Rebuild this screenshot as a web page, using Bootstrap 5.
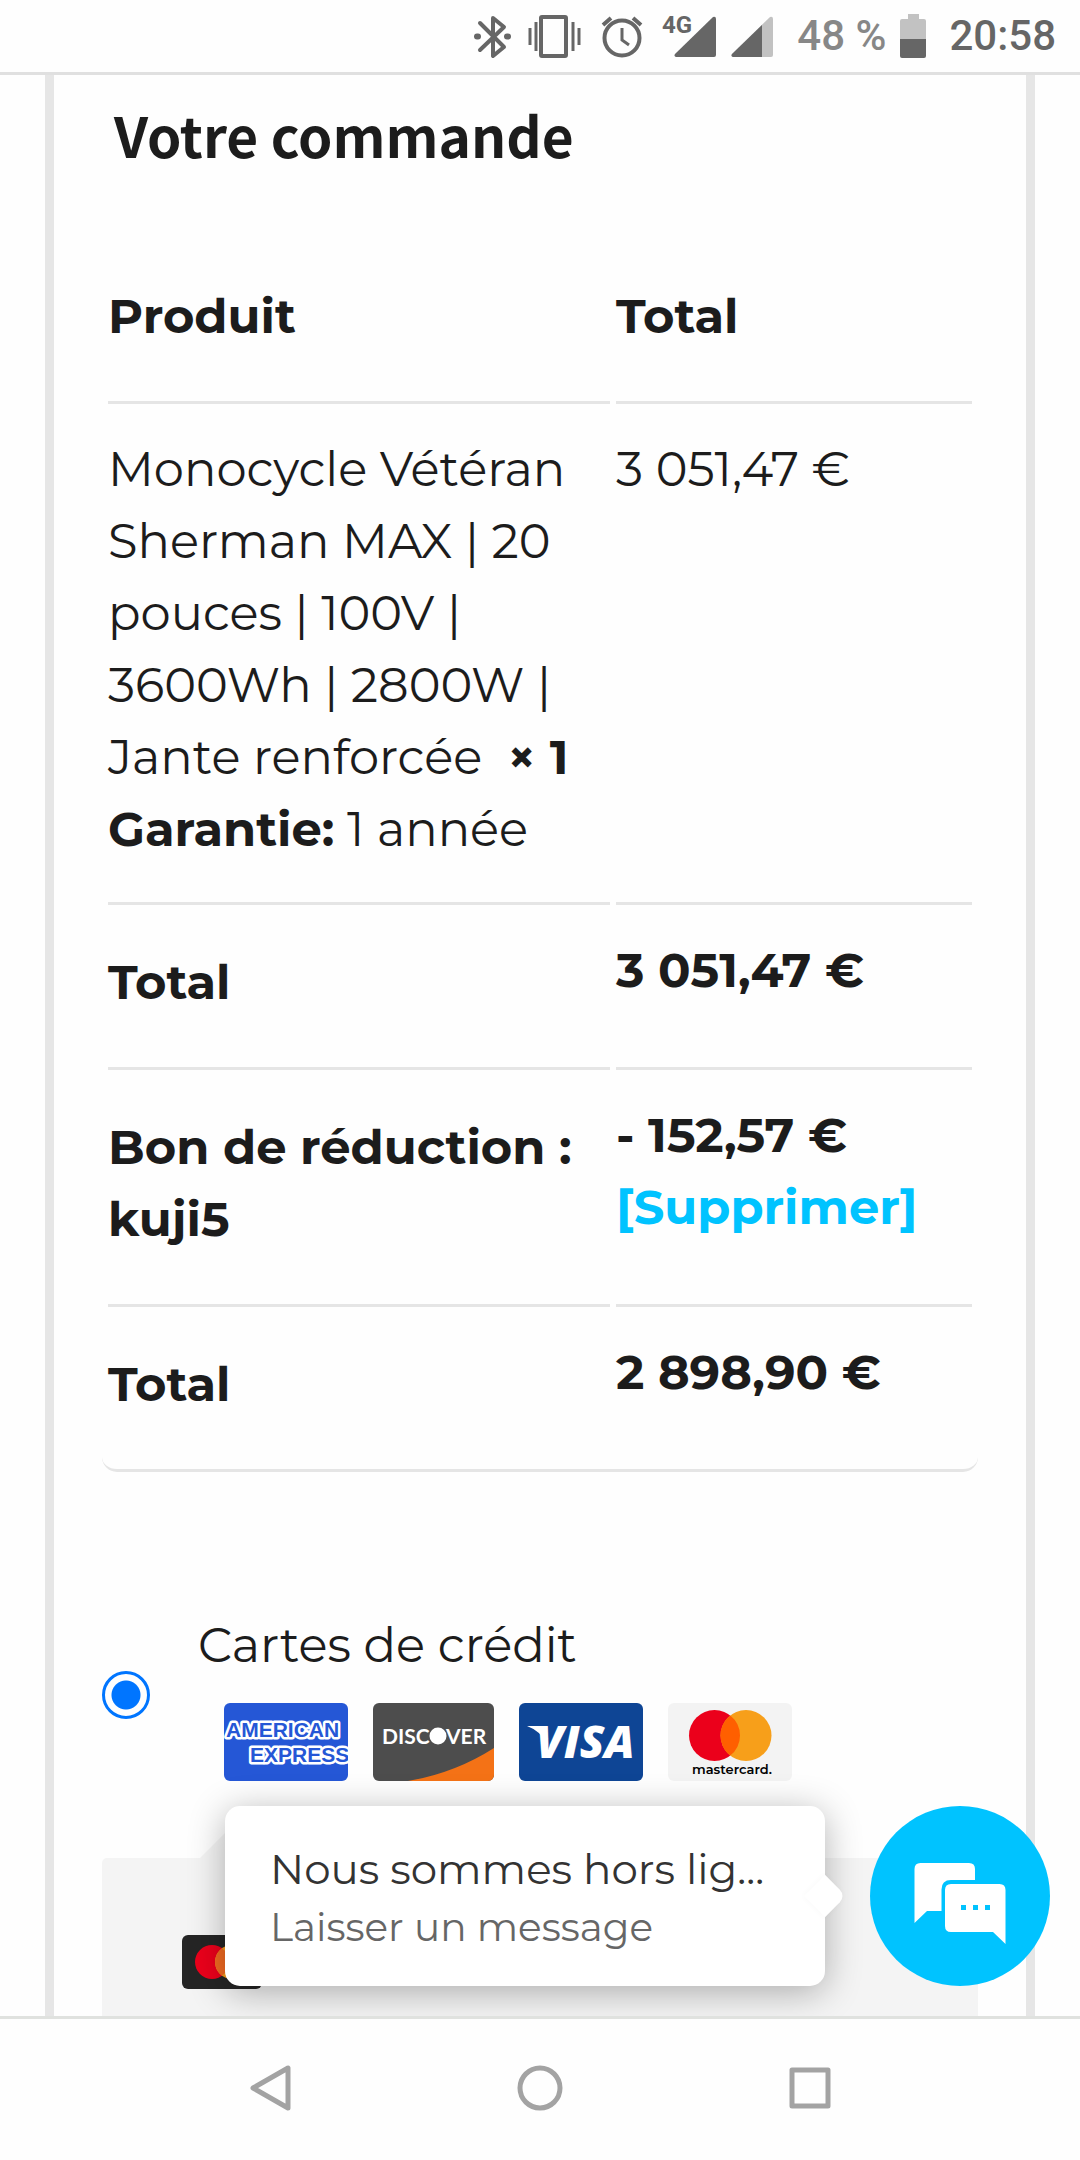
<!DOCTYPE html>
<html lang="fr">
<head>
<meta charset="utf-8">
<meta name="viewport" content="width=device-width, initial-scale=1">
<title>Votre commande</title>
<link href="https://cdn.jsdelivr.net/npm/bootstrap@5.3.0/dist/css/bootstrap.min.css" rel="stylesheet">
<style>
  :root { --ink: #1c1c1c; --rule: #e5e5e5; --accent: #00c3ff; }
  body { background: #fefefe; color: var(--ink); font: 400 48px/72px Montserrat, "DejaVu Sans", sans-serif; }

  /* system bars */
  .status-bar { height: 75px; padding: 0 24px; border-bottom: 3px solid #e0e0e0; color: #666; font: 500 42px/72px Roboto, sans-serif; }
  .status-icons { width: 314px; height: 72px; }
  .battery-level { color: #878787; margin: 0 13px 0 24px; }
  .battery-icon { width: 28px; height: 72px; margin-right: 22px; }
  .signal-label { font: 700 24px Roboto, sans-serif; }
  .nav-keys { height: 144px; padding: 0 12.5% 3px; border-top: 3px solid #e0e2df; background: #fefefe; }
  .nav-keys svg { width: 48px; height: 48px; }

  /* order panel */
  .order-panel { margin: 0 45px; border: solid #e6e6e6; border-width: 0 9px; padding: 0 48px; min-height: 100%; }
  .order-title { font: 700 55px/72px "Noto Sans CJK JP", "Noto Sans", sans-serif; margin: 0; padding: 23px 12px 0; }
  .order-table { margin-top: 69px; border-collapse: separate; border-spacing: 6px 0; border-bottom: 3px solid var(--rule); border-radius: 0 0 15px 15px; table-layout: fixed; }
  .order-table th, .order-table td { padding: 29px 0 37px; border-bottom: 3px solid var(--rule); vertical-align: top; }
  .order-table th { padding: 41px 0 49px; font-weight: 700; }
  .order-table tfoot td { font-weight: 700; }
  .order-table tfoot tr:last-child > * { border-bottom: 0; }
  .col-item { width: 502px; }
  .order-table a { color: var(--accent); text-decoration: none; }

  /* payment methods */
  .pay-method { margin-top: 137px; }
  .pay-method .form-check-input { width: 48px; height: 48px; margin: 0; border: 3px solid #0075ff; background: radial-gradient(circle, #0075ff 14px, #fefefe 15px); float: none; }
  .pay-label { padding-left: 48px; }
  .pay-cards { gap: 25px; padding: 22px 0 0 26px; }
  .pay-cards svg { height: 78px; }
  .pay-box { position: relative; margin-top: 77px; height: 240px; padding: 77px 80px; background: #f4f4f4; border-radius: 5px; line-height: 0; }
  .pay-box::before { content: ""; position: absolute; left: 98px; bottom: 100%; border: solid transparent; border-width: 0 48px 48px; border-bottom-color: #f4f4f4; }
  .mini-card { width: 80px; height: 54px; }

  /* chat widget */
  .chat-dock { position: absolute; right: 30px; bottom: 30px; gap: 45px; }
  .chat-bubble { position: relative; width: 600px; height: 180px; padding: 3px 45px 0; border: 0; border-radius: 15px; background: #fff; text-align: left; font-size: 42px; line-height: 58px; color: #666; box-shadow: 0 6px 36px rgba(0, 0, 0, .3); }
  .chat-bubble::after { content: ""; position: absolute; right: -15px; top: 75px; width: 30px; height: 30px; background: #fff; border-radius: 0 9px 0 0; box-shadow: 0 0 6px rgba(0, 0, 0, .03); transform: rotate(45deg); }
  .chat-head { color: #333; }
  .chat-sub { font-size: 39px; }
  .chat-open { width: 180px; height: 180px; padding: 0; border: 0; border-radius: 50%; background: var(--accent); line-height: 0; }
</style>
<script src="https://cdn.jsdelivr.net/npm/bootstrap@5.3.0/dist/js/bootstrap.bundle.min.js"></script>
</head>
<body class="d-flex flex-column vh-100 overflow-hidden">

<header class="status-bar d-flex align-items-center justify-content-end flex-shrink-0">
  <svg class="status-icons" viewBox="0 0 314 72" fill="none" stroke="#666" aria-hidden="true">
    <g stroke-width="4" stroke-linejoin="round" stroke-linecap="round">
      <path d="M21 23 45 47 34 56V18L45 27 21 50"/>
      <path d="M18 36.500h1M48 36.500h1" stroke-width="6"/>
      <rect x="82" y="17" width="25" height="39" rx="1"/>
    </g>
    <path d="M71 28v17M77 22v29M114 22v29M120 28v17" stroke-width="3"/>
    <circle cx="163" cy="38" r="17.500" stroke-width="4"/>
    <path d="M163 28v12l7 5" stroke-width="3"/>
    <path d="M144 25l8-7M182 25l-8-7" stroke-width="4"/>
    <g stroke="none">
      <text class="signal-label" x="203" y="33" fill="#666">4G</text>
      <path d="M217 57a2 2 0 0 1-1-3L254 17q3-1 3 2v36q0 2-2 2z" fill="#666"/>
      <path d="M274 57a2 2 0 0 1-1-3L311 17q3-1 3 2v36q0 2-2 2z" fill="#c2c2c2"/>
      <path d="M274 57a2 2 0 0 1-1-3L303 25v32z" fill="#666"/>
    </g>
  </svg>
  <span class="battery-level">48 %</span>
  <svg class="battery-icon" viewBox="0 0 28 72" aria-hidden="true">
    <path d="M9 14h11v5h5q2 0 2 2v18H1V21q0-2 2-2h6z" fill="#c2c2c2"/>
    <path d="M1 39h26v17q0 2-2 2H3q-2 0-2-2z" fill="#666"/>
  </svg>
  <span>20:58</span>
</header>

<main class="flex-grow-1 position-relative overflow-hidden">
  <section class="order-panel">
    <h1 class="order-title">Votre commande</h1>
    <table class="order-table w-100">
      <colgroup><col class="col-item"><col></colgroup>
      <thead>
        <tr><th>Produit</th><th>Total</th></tr>
      </thead>
      <tbody>
        <tr>
          <td>Monocycle Vétéran Sherman MAX | 20 pouces | 100V | 3600Wh | 2800W | Jante renforcée&nbsp; <strong>×&nbsp;1</strong>
            <div><strong>Garantie:</strong> 1 année</div></td>
          <td>3&nbsp;051,47&nbsp;€</td>
        </tr>
      </tbody>
      <tfoot>
        <tr><th>Total</th><td>3&nbsp;051,47&nbsp;€</td></tr>
        <tr><th>Bon de réduction : kuji5</th><td>- 152,57&nbsp;€ <a href="#">[Supprimer]</a></td></tr>
        <tr><th>Total</th><td>2&nbsp;898,90&nbsp;€</td></tr>
      </tfoot>
    </table>

    <div class="pay-method d-flex align-items-center">
      <input class="form-check-input flex-shrink-0" type="radio" name="payment" id="pay-credit" checked>
      <label class="pay-label" for="pay-credit">
        Cartes de crédit
        <span class="pay-cards d-flex">
          <svg width="124" viewBox="0 0 124 78" role="img" aria-label="American Express">
            <clipPath id="amex-clip"><rect width="124" height="78" rx="6"/></clipPath>
            <g clip-path="url(#amex-clip)" font-family="Liberation Sans, Arial, sans-serif" font-weight="700" font-size="21">
              <rect width="124" height="78" fill="#2557d6"/>
              <g fill="#2557d6" stroke="#fff" stroke-width="5" stroke-linejoin="round" paint-order="stroke"><text x="2" y="34">AMERICAN</text><text x="26" y="59">EXPRESS</text></g>
            </g>
          </svg>
          <svg width="121" viewBox="0 0 121 78" role="img" aria-label="Discover">
            <clipPath id="disc-clip"><rect width="121" height="78" rx="6"/></clipPath>
            <g clip-path="url(#disc-clip)">
              <rect width="121" height="78" fill="#4d4d4d"/>
              <path d="M35 78Q82 70 121 45V78z" fill="#f47216"/>
              <g fill="#fff" font-family="Lato, sans-serif" font-weight="700" font-size="21"><text x="9" y="41">DISC</text><text x="73" y="41">VER</text></g>
              <circle cx="65" cy="33" r="8.500" fill="#fff"/>
            </g>
          </svg>
          <svg width="124" viewBox="0 0 124 78" role="img" aria-label="Visa">
            <rect width="124" height="78" rx="6" fill="#0e4595"/>
            <path d="M8 23H24L29 42Q22 28 8 23z" fill="#fff"/>
            <text x="17" y="55" fill="#fff" font-family="Open Sans, sans-serif" font-weight="800" font-style="italic" font-size="45">VISA</text>
          </svg>
          <svg width="124" viewBox="0 0 124 78" role="img" aria-label="Mastercard">
            <rect width="124" height="78" rx="6" fill="#f3f3f3"/>
            <circle cx="46.500" cy="32.500" r="25.500" fill="#eb001b"/>
            <circle cx="78" cy="32.500" r="25.500" fill="#f79f1a"/>
            <path d="M62.250 12.440a25.500 25.500 0 0 1 0 40.120a25.500 25.500 0 0 1 0-40.120z" fill="#ff5f00"/>
            <text x="24" y="71" fill="#000" font-family="Montserrat, sans-serif" font-weight="600" font-size="13">mastercard.</text>
          </svg>
        </span>
      </label>
    </div>

    <div class="pay-box">
      <svg class="mini-card" viewBox="0 0 80 54" role="img" aria-label="Mastercard">
        <rect width="80" height="54" rx="6" fill="#252525"/>
        <circle cx="30" cy="27" r="17" fill="#eb001b"/>
        <circle cx="50" cy="27" r="17" fill="#f79e1b"/>
        <path d="M40 13.250a17 17 0 0 1 0 27.500a17 17 0 0 1 0-27.500z" fill="#f26a21"/>
      </svg>
    </div>
  </section>

  <aside class="chat-dock d-flex">
    <button class="chat-bubble" type="button">
      <span class="chat-head d-block">Nous sommes hors lig...</span>
      <span class="chat-sub d-block">Laisser un message</span>
    </button>
    <button class="chat-open" type="button" aria-label="Ouvrir la discussion">
      <svg viewBox="0 0 180 180" width="180" height="180" aria-hidden="true">
        <path d="M50.500 57H99q6 0 6 6V74H81q-9.500 0-9.500 9.500V105H57L44.500 117V63q0-6 6-6z" fill="#fff"/>
        <path d="M81 78h48.500q6 0 6 6v54l-12.500-12H81q-6 0-6-6V84q0-6 6-6z" fill="#fff"/>
        <path d="M91 99h5v5h-5zM103 99h5v5h-5zM115 99h5v5h-5z" fill="#00c3ff"/>
      </svg>
    </button>
  </aside>
</main>

<nav class="nav-keys d-flex align-items-center flex-shrink-0">
  <button class="btn p-0 border-0 flex-fill lh-1" type="button" aria-label="Retour">
    <svg viewBox="0 0 48 48" fill="none" stroke="#a3a3a3" stroke-width="5" stroke-linejoin="round"><path d="M42 4V44L7 24z"/></svg>
  </button>
  <button class="btn p-0 border-0 flex-fill lh-1" type="button" aria-label="Accueil">
    <svg viewBox="0 0 48 48" fill="none" stroke="#a3a3a3" stroke-width="5"><circle cx="24" cy="24" r="20"/></svg>
  </button>
  <button class="btn p-0 border-0 flex-fill lh-1" type="button" aria-label="Applications récentes">
    <svg viewBox="0 0 48 48" fill="none" stroke="#a3a3a3" stroke-width="5" stroke-linejoin="round"><rect x="6" y="6" width="36" height="36"/></svg>
  </button>
</nav>
</body>
</html>
